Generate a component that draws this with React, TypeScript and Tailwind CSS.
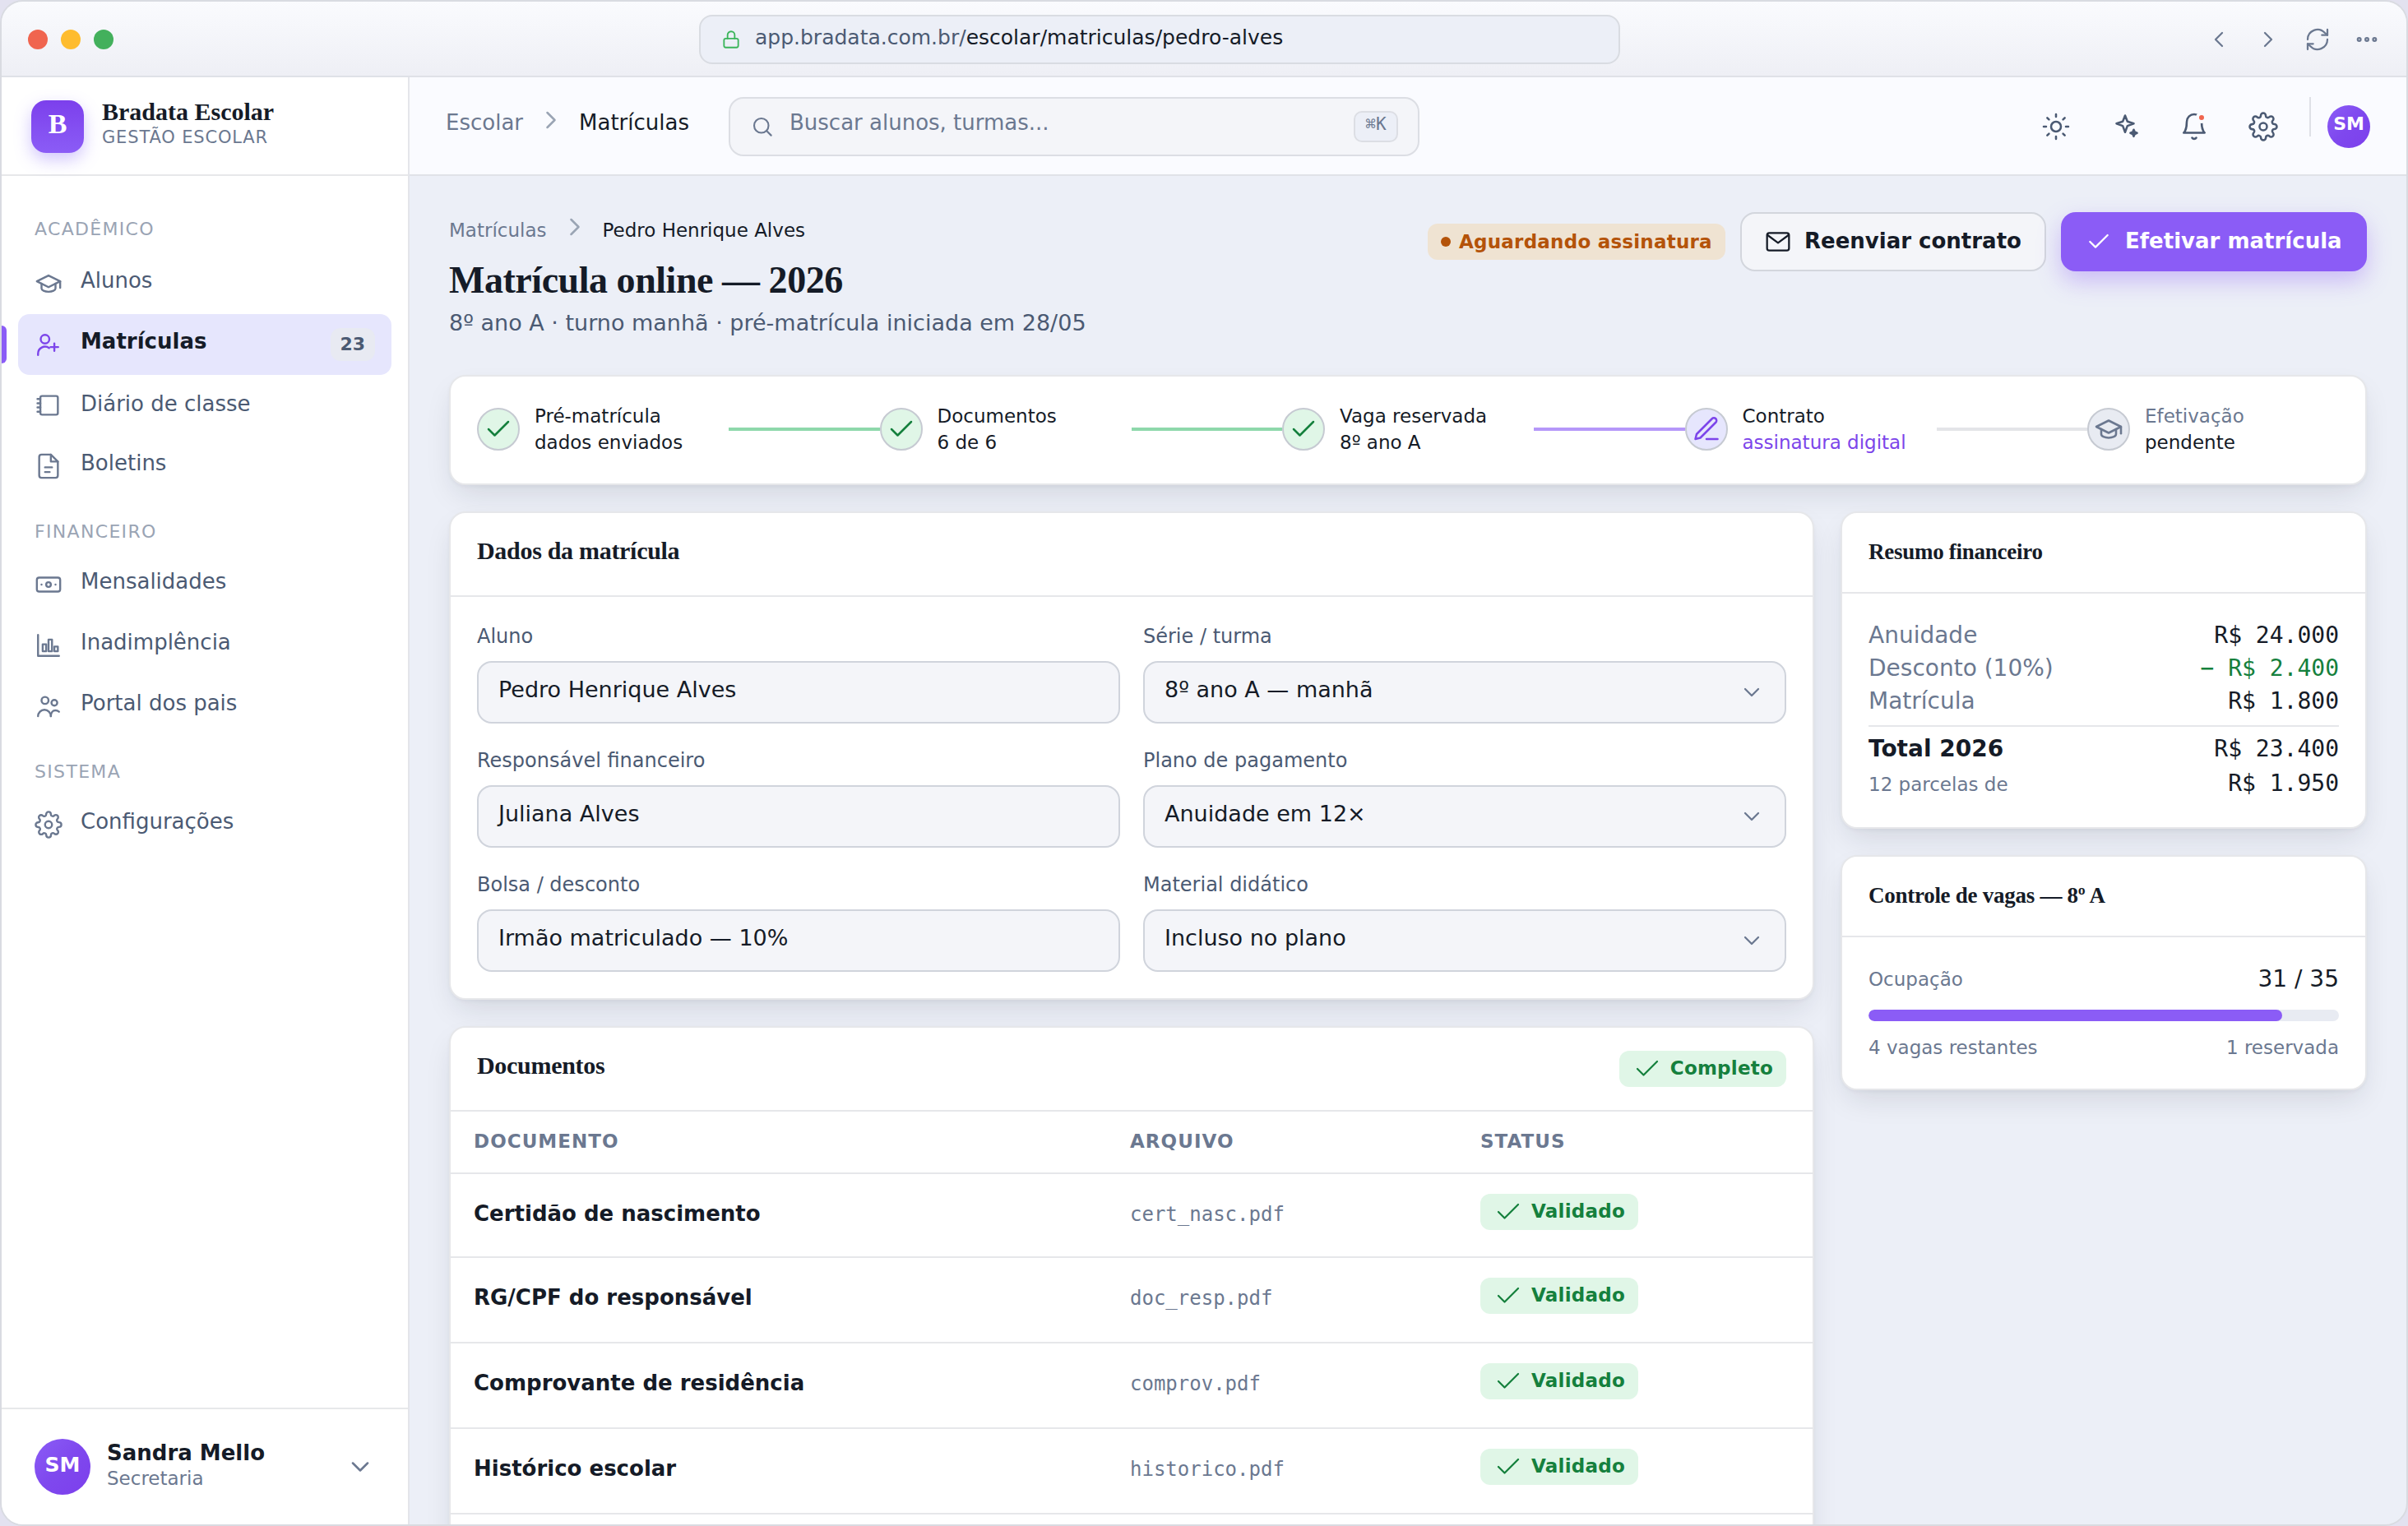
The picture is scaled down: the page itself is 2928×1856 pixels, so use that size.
import type { ReactNode } from 'react';
import { clsx } from 'clsx';

const icons: Record<string, ReactNode> = {
  lock: (
    <>
      <rect x="4" y="11" width="16" height="10" rx="2" />
      <path d="M8 11V7a4 4 0 0 1 8 0v4" />
    </>
  ),
  left: <path d="M15 6l-6 6 6 6" />,
  right: <path d="M9 6l6 6-6 6" />,
  down: <path d="M6 9l6 6 6-6" />,
  check: <path d="M4 12l5 5L20 6" />,
  refresh: (
    <>
      <path d="M3 12a9 9 0 0 1 15.5-6.2L21 8" />
      <path d="M21 3v5h-5" />
      <path d="M21 12a9 9 0 0 1-15.5 6.2L3 16" />
      <path d="M3 21v-5h5" />
    </>
  ),
  dots: (
    <>
      <circle cx="5" cy="12" r="1.4" />
      <circle cx="12" cy="12" r="1.4" />
      <circle cx="19" cy="12" r="1.4" />
    </>
  ),
  search: (
    <>
      <circle cx="11" cy="11" r="7" />
      <path d="M20.5 20.5L16 16" />
    </>
  ),
  cap: (
    <>
      <path d="M12 5L2 10l10 5 10-5z" />
      <path d="M6 12v4c0 1.7 2.7 3 6 3s6-1.3 6-3v-4" />
      <path d="M22 10v5.5" />
    </>
  ),
  userPlus: (
    <>
      <circle cx="9" cy="7.4" r="3.7" />
      <path d="M3 21v-1a6 6 0 0 1 9.5-5" />
      <path d="M17 11v6.500M13.700 14.200h6.600" />
    </>
  ),
  notebook: (
    <>
      <rect x="5" y="4" width="15" height="16" rx="1.5" />
      <path d="M2.500 6.500H5M2.500 10.200H5M2.500 13.800H5M2.500 17.500H5" />
    </>
  ),
  file: (
    <>
      <path d="M14 2H6a2 2 0 0 0-2 2v16a2 2 0 0 0 2 2h12a2 2 0 0 0 2-2V8z" />
      <path d="M14 2v6h6M9 13h6M9 17h4" />
    </>
  ),
  banknote: (
    <>
      <rect x="2" y="6" width="20" height="12" rx="2" />
      <circle cx="12" cy="12" r="2" />
      <path d="M6 12h.01M18 12h.01" />
    </>
  ),
  chart: (
    <>
      <path d="M3 3v18h18" />
      <rect x="7" y="11" width="3" height="6" />
      <rect x="12" y="7" width="3" height="10" />
      <rect x="17" y="13" width="3" height="4" />
    </>
  ),
  users: (
    <>
      <circle cx="9" cy="7" r="3" />
      <circle cx="17" cy="9" r="2.5" />
      <path d="M3 20.5a5.5 5.5 0 0 1 11 0" />
      <path d="M14 20.5c0-3 1.6-5 4-5 1.2 0 2.2.5 3 1.2" />
    </>
  ),
  gear: (
    <>
      <circle cx="12" cy="12" r="3" />
      <path d="M19.4 15a1.65 1.65 0 0 0 .33 1.82l.06.06a2 2 0 0 1 0 2.83 2 2 0 0 1-2.83 0l-.06-.06a1.65 1.65 0 0 0-1.82-.33 1.65 1.65 0 0 0-1 1.51V21a2 2 0 0 1-2 2 2 2 0 0 1-2-2v-.09A1.65 1.65 0 0 0 9 19.4a1.65 1.65 0 0 0-1.82.33l-.06.06a2 2 0 0 1-2.83 0 2 2 0 0 1 0-2.83l.06-.06a1.65 1.65 0 0 0 .33-1.82 1.65 1.65 0 0 0-1.51-1H3a2 2 0 0 1-2-2 2 2 0 0 1 2-2h.09A1.65 1.65 0 0 0 4.6 9a1.65 1.65 0 0 0-.33-1.82l-.06-.06a2 2 0 0 1 0-2.83 2 2 0 0 1 2.83 0l.06.06a1.65 1.65 0 0 0 1.82.33H9a1.65 1.65 0 0 0 1-1.51V3a2 2 0 0 1 2-2 2 2 0 0 1 2 2v.09a1.65 1.65 0 0 0 1 1.51 1.65 1.65 0 0 0 1.82-.33l.06-.06a2 2 0 0 1 2.83 0 2 2 0 0 1 0 2.83l-.06.06a1.65 1.65 0 0 0-.33 1.82V9a1.65 1.65 0 0 0 1.51 1H21a2 2 0 0 1 2 2 2 2 0 0 1-2 2h-.09a1.65 1.65 0 0 0-1.51 1z" />
    </>
  ),
  sun: (
    <>
      <circle cx="12" cy="12" r="4" />
      <path d="M12 2v2M12 20v2M4.9 4.9l1.4 1.4M17.7 17.7l1.4 1.4M2 12h2M20 12h2M4.9 19.1l1.4-1.4M17.7 6.3l1.4-1.4" />
    </>
  ),
  sparkle: (
    <>
      <path d="M12 3l1.9 4.800L19 9.500l-5.100 1.900L12 16.500l-1.900-5.100L5 9.500l5.100-1.700z" />
      <path d="M19 14.500l.8 1.900 1.900.8-1.900.8-.8 1.900-.8-1.900-1.900-.8 1.900-.8z" fill="currentColor" />
    </>
  ),
  bell: (
    <>
      <path d="M6 8a6 6 0 0 1 12 0c0 7 2.500 9 2.500 9h-17S6 15 6 8" />
      <path d="M10.300 21a2 2 0 0 0 3.400 0" />
    </>
  ),
  mail: (
    <>
      <rect x="2" y="4" width="20" height="16" rx="2" />
      <path d="M2.500 6l9.500 7 9.500-7" />
    </>
  ),
  pen: (
    <>
      <path d="M16.500 3.500a2.120 2.120 0 0 1 3 3L7 19l-4 1 1-4z" />
      <path d="M12 20h9" />
    </>
  ),
};

function Icon({ name, className, stroke = 1.7 }: { name: string; className?: string; stroke?: number }) {
  return (
    <svg
      viewBox="0 0 24 24"
      fill="none"
      stroke="currentColor"
      strokeWidth={stroke}
      strokeLinecap="round"
      strokeLinejoin="round"
      className={clsx('shrink-0', className)}
    >
      {icons[name]}
    </svg>
  );
}

const nav = [
  {
    title: 'ACADÊMICO',
    items: [
      { icon: 'cap', label: 'Alunos' },
      { icon: 'userPlus', label: 'Matrículas', badge: '23', active: true },
      { icon: 'notebook', label: 'Diário de classe' },
      { icon: 'file', label: 'Boletins' },
    ],
  },
  {
    title: 'FINANCEIRO',
    items: [
      { icon: 'banknote', label: 'Mensalidades' },
      { icon: 'chart', label: 'Inadimplência' },
      { icon: 'users', label: 'Portal dos pais' },
    ],
  },
  {
    title: 'SISTEMA',
    items: [{ icon: 'gear', label: 'Configurações' }],
  },
];

const steps = [
  { title: 'Pré-matrícula', sub: 'dados enviados', state: 'done' },
  { title: 'Documentos', sub: '6 de 6', state: 'done' },
  { title: 'Vaga reservada', sub: '8º ano A', state: 'done' },
  { title: 'Contrato', sub: 'assinatura digital', state: 'current' },
  { title: 'Efetivação', sub: 'pendente', state: 'todo' },
];

const fields = [
  { label: 'Aluno', value: 'Pedro Henrique Alves' },
  { label: 'Série / turma', value: '8º ano A — manhã', select: true },
  { label: 'Responsável financeiro', value: 'Juliana Alves' },
  { label: 'Plano de pagamento', value: 'Anuidade em 12×', select: true },
  { label: 'Bolsa / desconto', value: 'Irmão matriculado — 10%' },
  { label: 'Material didático', value: 'Incluso no plano', select: true },
];

const documents = [
  { name: 'Certidão de nascimento', file: 'cert_nasc.pdf' },
  { name: 'RG/CPF do responsável', file: 'doc_resp.pdf' },
  { name: 'Comprovante de residência', file: 'comprov.pdf' },
  { name: 'Histórico escolar', file: 'historico.pdf' },
];

function TitleBar() {
  return (
    <div className="flex h-[92px] shrink-0 items-center border-b-2 border-[#dfe1e7] bg-linear-to-b from-[#fafbfe] to-[#eeeff5] pt-0.5 pr-8 pl-8">
      <div className="flex w-[816px] gap-4">
        <span className="size-6 rounded-full bg-[#f0654f]" />
        <span className="size-6 rounded-full bg-[#febc2e]" />
        <span className="size-6 rounded-full bg-[#43b05c]" />
      </div>
      <div className="flex h-[60px] w-[1120px] items-center gap-4 rounded-2xl border-2 border-[#d9dce2] bg-[#eceff7] pl-6">
        <Icon name="lock" className="size-[26px] text-[#3bb55b]" />
        <span className="pb-1.5 text-[25px] leading-none text-[#4b5a73]">
          app.bradata.com.br/<span className="text-[#151b27]">escolar/matriculas/pedro-alves</span>
        </span>
      </div>
      <div className="ml-auto flex items-center gap-7 text-[#6b7890]">
        <Icon name="left" className="size-8" />
        <Icon name="right" className="size-8" />
        <Icon name="refresh" className="size-8" />
        <Icon name="dots" className="size-8" />
      </div>
    </div>
  );
}

function Sidebar() {
  return (
    <aside className="flex w-[496px] shrink-0 flex-col border-r-2 border-[#e4e5ea] bg-white">
      <div className="flex h-[120px] shrink-0 items-center gap-[22px] border-b-2 border-[#e7e8ea] pt-0.5 pl-9">
        <div className="flex size-16 items-center justify-center rounded-[18px] bg-linear-to-b from-[#7c3fec] to-[#8b5cf6] pb-[7px] font-['Liberation_Serif',serif] text-[34px] font-bold text-white shadow-[0_8px_20px_rgba(124,92,246,0.35)]">
          B
        </div>
        <div className="pb-[7px]">
          <p className="font-['Liberation_Serif',serif] text-[30px] leading-[34px] font-bold text-[#151b27]">Bradata Escolar</p>
          <p className="text-[21px] leading-[29px] tracking-[0.04em] text-[#6b7890]">GESTÃO ESCOLAR</p>
        </div>
      </div>
      <nav className="flex-1 px-5 pt-[22px]">
        {nav.map((group, i) => (
          <div key={group.title}>
            <p
              className={clsx(
                'pt-[31px] pl-5 text-[22px] leading-6 tracking-[0.06em] text-[#9aa4b4]',
                i === 0 ? 'pb-[17px]' : 'pb-[15px]',
              )}
            >
              {group.title}
            </p>
            {group.items.map((item) => (
              <div
                key={item.label}
                className={clsx(
                  'relative flex h-[74px] items-center gap-[22px] rounded-[14px] pr-5 pl-5 text-[26px]',
                  item.active ? 'bg-[#e6e6fd] font-bold text-[#151b27]' : 'text-[#4b5a73]',
                )}
              >
                {item.active && <span className="absolute top-3.5 -left-5 h-[46px] w-1.5 rounded-r-md bg-[#8b5cf6]" />}
                <Icon name={item.icon} className={clsx('size-[34px]', item.active ? 'text-[#7c45ea]' : 'text-[#6b7890]')} />
                <span className={clsx('leading-none', item.icon === 'notebook' ? 'pb-1' : 'pb-2')}>{item.label}</span>
                {item.badge && (
                  <span className="ml-auto flex h-10 items-center rounded-xl bg-[#e8eaf2] pr-3 pl-[11px] pb-0.5 text-[22px] text-[#4b5a73]">
                    {item.badge}
                  </span>
                )}
              </div>
            ))}
          </div>
        ))}
      </nav>
      <div className="flex h-[142px] shrink-0 items-center gap-5 border-t-2 border-[#e7e8ea] pr-10 pl-10">
        <div className="flex size-[68px] items-center justify-center rounded-full bg-linear-to-br from-[#8b5cf6] via-[#7f48ee] to-[#7c3fec] pb-1 text-[25px] font-bold text-white">
          SM
        </div>
        <div className="pb-1">
          <p className="text-[26px] leading-8 font-bold text-[#151b27]">Sandra Mello</p>
          <p className="text-[23px] leading-[30px] text-[#6b7890]">Secretaria</p>
        </div>
        <Icon name="down" className="ml-auto size-9 text-[#6b7890]" />
      </div>
    </aside>
  );
}

function TopBar() {
  return (
    <header className="flex h-[120px] shrink-0 items-center border-b-2 border-[#e0e2e8] bg-[#fafbff] pt-0.5 pr-11 pl-11">
      <div className="flex items-center gap-4 text-[26px]">
        <span className="pb-2.5 leading-none text-[#6b7890]">Escolar</span>
        <Icon name="right" className="mb-4 size-9 text-[#9aa4b4]" />
        <span className="pb-2.5 leading-none text-[#151b27]">Matrículas</span>
      </div>
      <div className="ml-12 flex h-[72px] w-[840px] items-center rounded-[18px] border-2 border-[#dcdee4] bg-[#f4f5f9] px-6">
        <Icon name="search" className="size-[30px] text-[#6b7890]" />
        <span className="ml-[18px] pb-2.5 text-[26px] leading-none text-[#6b7890]">Buscar alunos, turmas...</span>
        <span className="ml-auto flex h-[38px] w-[54px] items-center justify-center rounded-[10px] border-2 border-[#dcdee4] bg-[#eceff7] pb-1 font-['DejaVu_Sans_Mono',monospace] text-[21px] text-[#6b7890]">
          ⌘K
        </span>
      </div>
      <div className="ml-auto flex items-center gap-12 text-[#4b5a73]">
        <Icon name="sun" className="size-9" />
        <Icon name="sparkle" className="size-9" />
        <div className="relative">
          <Icon name="bell" className="size-9" />
          <span className="absolute top-0 right-0.5 size-3.5 rounded-full border-4 border-[#fafbff] bg-[#f0654f]" />
        </div>
        <Icon name="gear" className="size-9" />
      </div>
      <span className="mb-6 ml-[38px] h-12 w-0.5 bg-[#dfe1e7]" />
      <div className="ml-5 flex size-[52px] items-center justify-center rounded-full bg-linear-to-br from-[#8b5cf6] via-[#7f48ee] to-[#7c3fec] pb-2 text-[22px] font-bold text-white">
        SM
      </div>
    </header>
  );
}

function Card({ className, children }: { className?: string; children: ReactNode }) {
  return (
    <section
      className={clsx(
        'rounded-[20px] border-2 border-[#e6e7ea] bg-white shadow-[0_2px_4px_rgba(20,30,50,0.04),0_16px_36px_-8px_rgba(20,30,50,0.13)]',
        className,
      )}
    >
      {children}
    </section>
  );
}

function SuccessBadge({ children }: { children: string }) {
  return (
    <span className="inline-flex h-11 items-center gap-2.5 rounded-xl bg-[#e0f6e7] px-4 text-[23px] font-bold tracking-[0.01em] text-[#15803d]">
      <Icon name="check" className="size-9" stroke={1.5} />
      <span className="pb-0.5 leading-none">{children}</span>
    </span>
  );
}

function PageHeader() {
  return (
    <div className="flex justify-between pb-[43px]">
      <div>
        <div className="flex h-9 items-center gap-4 text-[23px]">
          <span className="pt-2 leading-none text-[#6b7890]">Matrículas</span>
          <Icon name="right" className="size-9 text-[#9aa4b4]" />
          <span className="pt-2 leading-none text-[#151b27]">Pedro Henrique Alves</span>
        </div>
        <h1 className="mt-[19px] font-['Liberation_Serif',serif] text-[46px] leading-14 font-bold tracking-[-0.01em] text-[#151b27]">
          Matrícula online — 2026
        </h1>
        <p className="mt-1 text-[27px] leading-10 text-[#4b5a73]">8º ano A · turno manhã · pré-matrícula iniciada em 28/05</p>
      </div>
      <div className="flex h-[72px] items-center gap-[18px]">
        <span className="flex h-11 w-[362px] items-center gap-2.5 rounded-xl bg-[#efe3d2] pl-4 text-[23px] font-bold tracking-[0.01em] text-[#b45309]">
          <span className="size-3 rounded-full bg-[#b45309]" />
          Aguardando assinatura
        </span>
        <button className="flex h-[72px] w-[372px] items-center gap-4 rounded-[18px] border-2 border-[#d3d6dd] bg-[#f4f5f9] pl-7 text-[26px] font-bold text-[#151b27]">
          <Icon name="mail" className="size-8" />
          <span className="pb-0.5">Reenviar contrato</span>
        </button>
        <button className="flex h-[72px] w-[372px] items-center gap-4 rounded-[18px] bg-[#8b5cf6] pl-[30px] text-[26px] font-bold text-white shadow-[0_12px_28px_rgba(139,92,246,0.35)]">
          <Icon name="check" className="size-8" />
          <span className="pb-0.5">Efetivar matrícula</span>
        </button>
      </div>
    </div>
  );
}

function Stepper() {
  return (
    <Card className="flex h-[134px] items-center px-8 pb-0.5">
      {steps.map((step, i) => (
        <div key={step.title} className="contents">
          {i > 0 && (
            <span
              className={clsx(
                'h-1 flex-1',
                step.state === 'done' && 'bg-[#8ed8ab]',
                step.state === 'current' && 'bg-[#b597f9]',
                step.state === 'todo' && 'bg-[#e4e5e8]',
              )}
            />
          )}
          <div className="flex w-[306px] items-center gap-[18px]">
            <span
              className={clsx(
                'flex size-[52px] items-center justify-center rounded-full border-2 border-[#c6cad2]',
                step.state === 'done' && 'bg-[#e0f6e7] text-[#15803d]',
                step.state === 'current' && 'bg-[#e6e6fd] text-[#7c45ea]',
                step.state === 'todo' && 'bg-[#e8ebf2] text-[#6b7890]',
              )}
            >
              <Icon name={step.state === 'done' ? 'check' : step.state === 'current' ? 'pen' : 'cap'} className="size-9" />
            </span>
            <span className="text-[23px] leading-8 text-[#151b27]">
              <span className={clsx('block', step.state === 'todo' && 'text-[#6b7890]')}>{step.title}</span>
              <span className={clsx('block', step.state === 'current' && 'text-[#7c45ea]')}>{step.sub}</span>
            </span>
          </div>
        </div>
      ))}
    </Card>
  );
}

function EnrollmentForm() {
  return (
    <Card>
      <h2 className="h-[102px] border-b-2 border-[#e6e7ea] px-8 font-['Liberation_Serif',serif] text-[30px] leading-[92px] font-bold tracking-[-0.01em] text-[#151b27]">
        Dados da matrícula
      </h2>
      <div className="grid grid-cols-2 gap-x-7 gap-y-[29px] px-8 pt-8 pb-8">
        {fields.map((field) => (
          <div key={field.label}>
            <p className="h-[46px] text-[24px] leading-8 text-[#4b5a73]">{field.label}</p>
            <div className="flex h-[76px] items-center justify-between rounded-[18px] border-2 border-[#d0d4dc] bg-[#f4f5f9] px-6 text-[27px] text-[#151b27]">
              <span className="pb-2 leading-none">{field.value}</span>
              {field.select && <Icon name="down" className="size-8 text-[#6b7890]" />}
            </div>
          </div>
        ))}
      </div>
    </Card>
  );
}

function DocumentsCard() {
  return (
    <Card>
      <div className="flex h-[102px] items-center justify-between border-b-2 border-[#e6e7ea] px-8">
        <h2 className="pb-2 font-['Liberation_Serif',serif] text-[30px] leading-none font-bold tracking-[-0.01em] text-[#151b27]">Documentos</h2>
        <SuccessBadge>Completo</SuccessBadge>
      </div>
      <div className="grid h-[76px] grid-cols-[798px_426px_1fr] items-center border-b-2 border-[#e6e7ea] pb-0.5 pl-7 text-[23px] font-bold tracking-[0.045em] text-[#6b7890]">
        <span>DOCUMENTO</span>
        <span>ARQUIVO</span>
        <span>STATUS</span>
      </div>
      {documents.map((doc, i) => (
        <div
          key={doc.name}
          className={clsx(
            'grid grid-cols-[798px_426px_1fr] items-start border-b-2 border-[#e6e7ea] pt-6 pl-7',
            i === 0 ? 'h-[102px]' : 'h-[104px]',
          )}
        >
          <span className="pt-2 text-[26px] leading-8 font-bold text-[#151b27]">{doc.name}</span>
          <span className="pt-[9px] font-['DejaVu_Sans_Mono',monospace] text-[24px] leading-8 text-[#6b7890]">{doc.file}</span>
          <span className="flex">
            <SuccessBadge>Validado</SuccessBadge>
          </span>
        </div>
      ))}
      <div className="h-[104px]" />
    </Card>
  );
}

function SideTitle({ children }: { children: string }) {
  return (
    <h2 className="h-[98px] border-b-2 border-[#e6e7ea] px-8 font-['Liberation_Serif',serif] text-[27px] leading-[94px] font-bold tracking-[-0.01em] text-[#151b27]">
      {children}
    </h2>
  );
}

function SummaryRow({ label, value, className }: { label: string; value: string; className?: string }) {
  return (
    <div className="flex h-10 items-center justify-between text-[28px] leading-none">
      <span className="text-[#6b7890]">{label}</span>
      <span className={clsx("font-['DejaVu_Sans_Mono',monospace]", className ?? 'text-[#151b27]')}>{value}</span>
    </div>
  );
}

function FinanceCard() {
  return (
    <Card>
      <SideTitle>Resumo financeiro</SideTitle>
      <div className="h-[284px] px-8 pt-[31px]">
        <SummaryRow label="Anuidade" value="R$ 24.000" />
        <SummaryRow label="Desconto (10%)" value="− R$ 2.400" className="text-[#15803d]" />
        <SummaryRow label="Matrícula" value="R$ 1.800" />
        <div className="mt-[9px] flex h-[55px] items-center justify-between border-t-2 border-[#e6e7ea] text-[28px] leading-none text-[#151b27]">
          <span className="font-bold">Total 2026</span>
          <span className="font-['DejaVu_Sans_Mono',monospace]">R$ 23.400</span>
        </div>
        <div className="flex items-baseline justify-between leading-8">
          <span className="text-[23px] text-[#6b7890]">12 parcelas de</span>
          <span className="font-['DejaVu_Sans_Mono',monospace] text-[28px] text-[#151b27]">R$ 1.950</span>
        </div>
      </div>
    </Card>
  );
}

function SeatsCard() {
  const taken = 88;
  return (
    <Card>
      <SideTitle>Controle de vagas — 8º A</SideTitle>
      <div className="h-[184px] px-8 pt-[35px]">
        <div className="flex items-center justify-between leading-8">
          <span className="text-[23px] text-[#6b7890]">Ocupação</span>
          <span className="text-[28px] text-[#151b27]">31 / 35</span>
        </div>
        <div className="mt-[21px] h-3.5 overflow-hidden rounded-full bg-[#e8ebf2]">
          <div className="h-full rounded-full bg-[#8b5cf6]" style={{ width: `${taken}%` }} />
        </div>
        <div className="mt-4 flex justify-between text-[23px] leading-8 text-[#6b7890]">
          <span>4 vagas restantes</span>
          <span>1 reservada</span>
        </div>
      </div>
    </Card>
  );
}

export default function App() {
  return (
    <div className="h-[1856px] w-[2928px] overflow-hidden bg-[#e3e2f0] font-['DejaVu_Sans',sans-serif]">
      <div className="flex h-full flex-col overflow-hidden rounded-[28px] border-2 border-[#d9dbe1] bg-[#eceff7]">
        <TitleBar />
        <div className="flex min-h-0 flex-1">
          <Sidebar />
          <div className="flex min-w-0 flex-1 flex-col">
            <TopBar />
            <main className="min-h-0 flex-1 overflow-hidden px-12 pt-11">
              <PageHeader />
              <Stepper />
              <div className="mt-8 grid grid-cols-[1660px_640px] items-start gap-8">
                <div className="flex flex-col gap-8">
                  <EnrollmentForm />
                  <DocumentsCard />
                </div>
                <div className="flex flex-col gap-8">
                  <FinanceCard />
                  <SeatsCard />
                </div>
              </div>
            </main>
          </div>
        </div>
      </div>
    </div>
  );
}
